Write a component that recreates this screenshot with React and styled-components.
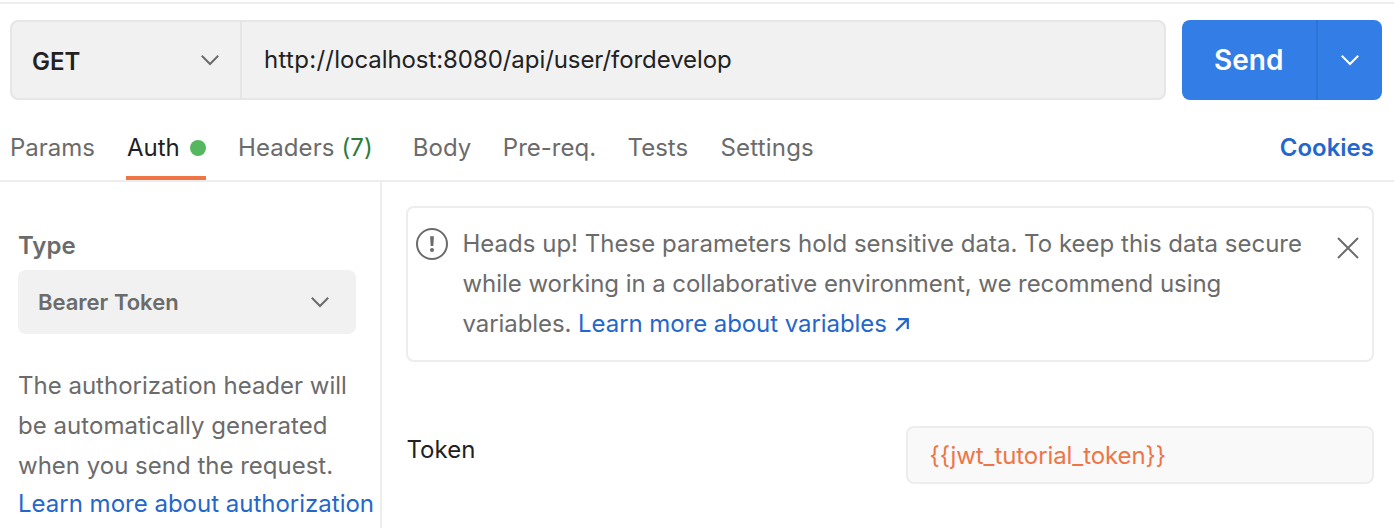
import React from "react";
import styled, { createGlobalStyle } from "styled-components";

const GlobalStyle = createGlobalStyle`
  * { box-sizing: border-box; }
  body {
    margin: 0;
    background: #fff;
    color: #212121;
    font-family: Inter, "Liberation Sans", sans-serif;
    font-size: 24px;
    line-height: 40px;
    overflow: hidden;
  }
`;

const Page = styled.div`
  width: 1394px;
  height: 528px;
  display: flex;
  flex-direction: column;
  overflow: hidden;
  padding-top: 2px;
`;

const RequestBar = styled.div`
  display: flex;
  flex: none;
  gap: 16px;
  height: 98px;
  border-top: 2px solid #ededed;
  padding: 16px 12px 0 10px;
`;

const UrlGroup = styled.div`
  display: flex;
  width: 1156px;
  height: 80px;
  border: 2px solid #e6e6e6;
  border-radius: 8px;
  background: #f1f1f1;
`;

const MethodSelect = styled.div`
  display: flex;
  align-items: center;
  justify-content: space-between;
  width: 230px;
  padding: 3px 19px 0 20px;
  border-right: 2px solid #e6e6e6;
  font-weight: 600;

  svg { margin-top: -3px; }
`;

const UrlField = styled.div`
  flex: 1;
  padding: 18px 22px;
`;

const UrlPart = styled.span`
  letter-spacing: ${(p) => p.$track};
`;

const SendGroup = styled.div`
  display: flex;
  width: 200px;
  height: 80px;
  border-radius: 8px;
  background: #327de6;
  color: #fff;
`;

const SendButton = styled.div`
  width: 136px;
  border-right: 2px solid #2d73d6;
  padding: 20px 0 0 32px;
  font-size: 28px;
  font-weight: 600;
`;

const SendMenu = styled.div`
  flex: 1;
  display: flex;
  align-items: center;
  justify-content: center;
`;

const Tabs = styled.div`
  display: flex;
  flex: none;
  height: 82px;
  padding: 0 20px 0 10px;
  border-bottom: 2px solid #ededed;
`;

const Tab = styled.div`
  display: flex;
  align-items: center;
  height: 80px;
  padding-top: 20px;
  padding-left: ${(p) => (p.$active ? "0.8px" : "0")};
  margin-right: ${(p) => p.$gap || "32px"};
  color: ${(p) => (p.$active ? "#212121" : "#6b6b6b")};
  letter-spacing: ${(p) => p.$track || "0"};
  white-space: pre;
  border-bottom: 4px solid ${(p) => (p.$active ? "#ef7545" : "transparent")};
`;

const Dot = styled.span`
  width: 16px;
  height: 16px;
  margin-left: 10px;
  border-radius: 50%;
  background: #55b860;
`;

const Count = styled.span`
  color: #2b7d3b;
`;

const Cookies = styled.div`
  margin-left: auto;
  padding-top: 28px;
  font-weight: 600;
  color: #2467cc;
`;

const Body = styled.div`
  display: flex;
  flex: 1;
  min-height: 0;
`;

const Sidebar = styled.div`
  width: 382px;
  flex: none;
  padding: 44px 0 0 18px;
  border-right: 2px solid #ededed;
  color: #6b6b6b;
  white-space: nowrap;
`;

const Label = styled.div`
  font-weight: 600;
`;

const TypeSelect = styled.div`
  display: flex;
  align-items: center;
  justify-content: space-between;
  width: 338px;
  height: 64px;
  margin: 4px 0 32px;
  padding: 0 25px 0 20px;
  border-radius: 8px;
  background: #f1f1f1;
  font-size: 22px;
  font-weight: 600;
`;

const Line = styled.div`
  letter-spacing: ${(p) => p.$track || "0"};
`;

const Link = styled.a`
  color: #2467cc;
`;

const LinkLine = styled(Line)`
  margin-top: -2px;
`;

const Main = styled.div`
  flex: 1;
  padding: 24px 20px 0 24px;
`;

const Notice = styled.div`
  display: flex;
  height: 156px;
  border: 2px solid #ededed;
  border-radius: 8px;
  padding: 16px 13px 0 8px;
  color: #6b6b6b;
  white-space: nowrap;
`;

const NoticeIcon = styled.div`
  width: 46.5px;
  padding-top: 4px;
  line-height: 0;
`;

const NoticeText = styled.div`
  flex: 1;

  svg { margin-left: 2px; }
`;

const CloseButton = styled.div`
  padding-top: 13px;
  line-height: 0;
`;

const TokenRow = styled.div`
  display: flex;
  justify-content: space-between;
  margin-top: 64px;
`;

const TokenLabel = styled.div`
  padding: 4px 0 0 0.5px;
`;

const TokenField = styled.div`
  width: 468px;
  height: 58px;
  padding: 8px 21.5px;
  border: 2px solid #ededed;
  border-radius: 8px;
  background: #f9f9f9;
  color: #ef7545;
  letter-spacing: -0.08px;
`;

const Chevron = ({ color }) => (
  <svg width="22" height="16" viewBox="0 0 22 16" fill="none" stroke={color} strokeWidth="2">
    <path d="M2.8 3.8 11 12l8.2-8.2" />
  </svg>
);

export default function App() {
  return (
    <>
      <GlobalStyle />
      <Page>
        <RequestBar>
          <UrlGroup>
            <MethodSelect>GET<Chevron color="#6b6b6b" /></MethodSelect>
            <UrlField>
              <UrlPart $track="0.3px">http://</UrlPart>
              <UrlPart $track="-0.07px">localhost:8080/api/user/fordevelop</UrlPart>
            </UrlField>
          </UrlGroup>
          <SendGroup>
            <SendButton>Send</SendButton>
            <SendMenu><Chevron color="#fff" /></SendMenu>
          </SendGroup>
        </RequestBar>
        <Tabs>
          <Tab $gap="31.2px">Params</Tab>
          <Tab $active $gap="32.2px">Auth<Dot /></Tab>
          <Tab $gap="40px" $track="0.1px">Headers <Count>(7)</Count></Tab>
          <Tab $gap="31.6px">Body</Tab>
          <Tab $gap="31.5px">Pre-req.</Tab>
          <Tab $gap="32.3px">Tests</Tab>
          <Tab $track="0.2px">Settings</Tab>
          <Cookies>Cookies</Cookies>
        </Tabs>
        <Body>
          <Sidebar>
            <Label>Type</Label>
            <TypeSelect>Bearer Token<Chevron color="#6b6b6b" /></TypeSelect>
            <Line>The authorization header will</Line>
            <Line $track="0.04px">be automatically generated</Line>
            <Line>when you send the request.</Line>
            <LinkLine><Link>Learn more about authorization</Link></LinkLine>
          </Sidebar>
          <Main>
            <Notice>
              <NoticeIcon>
                <svg width="32" height="32" viewBox="0 0 32 32" fill="none">
                  <circle cx="16" cy="16" r="15" stroke="#6b6b6b" strokeWidth="2" />
                  <path d="M14.1 8.2h3.8l-.6 9.8h-2.6z" fill="#6b6b6b" />
                  <circle cx="16" cy="22" r="2" fill="#6b6b6b" />
                </svg>
              </NoticeIcon>
              <NoticeText>
                <Line $track="0.01px">Heads up! These parameters hold sensitive data. To keep this data secure</Line>
                <Line $track="-0.05px">while working in a collaborative environment, we recommend using</Line>
                <Line $track="-0.07px">
                  variables. <Link>Learn more about variables{" "}
                  <svg width="14" height="14" viewBox="0 0 14 14" fill="none" stroke="#2467cc" strokeWidth="2.2">
                    <path d="M1.2 12.6 12.6 1.2M3 1.2H12.8V11" />
                  </svg></Link>
                </Line>
              </NoticeText>
              <CloseButton>
                <svg width="22" height="22" viewBox="0 0 22 22" stroke="#6b6b6b" strokeWidth="2">
                  <path d="M1 1l20 20M21 1 1 21" />
                </svg>
              </CloseButton>
            </Notice>
            <TokenRow>
              <TokenLabel>Token</TokenLabel>
              <TokenField>{"{{jwt_tutorial_token}}"}</TokenField>
            </TokenRow>
          </Main>
        </Body>
      </Page>
    </>
  );
}
